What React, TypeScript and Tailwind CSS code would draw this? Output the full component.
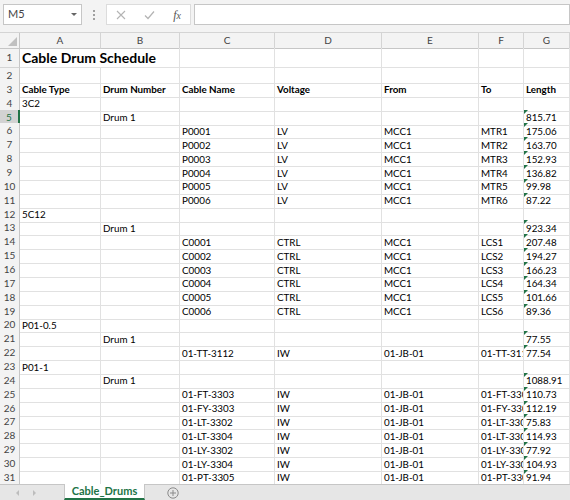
import React from "react";

const GRID = "grid grid-cols-[20px_81px_79px_95px_107px_97px_45px_46px]";
const FONT = { fontFamily: "Lato, 'Liberation Sans', sans-serif" };

type Row = {
  n: number;
  cells: string[];
  bold?: boolean;
  tri?: boolean;
};

const p = (c: string, d: string, e: string, f: string, g: string) => ["", "", c, d, e, f, g];

const rows: Row[] = [
  { n: 2, cells: [] },
  {
    n: 3,
    cells: ["Cable Type", "Drum Number", "Cable Name", "Voltage", "From", "To", "Length"],
    bold: true,
  },
  { n: 4, cells: ["3C2"] },
  { n: 5, cells: ["", "Drum 1", "", "", "", "", "815.71"], tri: true },
  { n: 6, cells: p("P0001", "LV", "MCC1", "MTR1", "175.06"), tri: true },
  { n: 7, cells: p("P0002", "LV", "MCC1", "MTR2", "163.70"), tri: true },
  { n: 8, cells: p("P0003", "LV", "MCC1", "MTR3", "152.93"), tri: true },
  { n: 9, cells: p("P0004", "LV", "MCC1", "MTR4", "136.82"), tri: true },
  { n: 10, cells: p("P0005", "LV", "MCC1", "MTR5", "99.98"), tri: true },
  { n: 11, cells: p("P0006", "LV", "MCC1", "MTR6", "87.22"), tri: true },
  { n: 12, cells: ["5C12"] },
  { n: 13, cells: ["", "Drum 1", "", "", "", "", "923.34"], tri: true },
  { n: 14, cells: p("C0001", "CTRL", "MCC1", "LCS1", "207.48"), tri: true },
  { n: 15, cells: p("C0002", "CTRL", "MCC1", "LCS2", "194.27"), tri: true },
  { n: 16, cells: p("C0003", "CTRL", "MCC1", "LCS3", "166.23"), tri: true },
  { n: 17, cells: p("C0004", "CTRL", "MCC1", "LCS4", "164.34"), tri: true },
  { n: 18, cells: p("C0005", "CTRL", "MCC1", "LCS5", "101.66"), tri: true },
  { n: 19, cells: p("C0006", "CTRL", "MCC1", "LCS6", "89.36"), tri: true },
  { n: 20, cells: ["P01-0.5"] },
  { n: 21, cells: ["", "Drum 1", "", "", "", "", "77.55"], tri: true },
  { n: 22, cells: p("01-TT-3112", "IW", "01-JB-01", "01-TT-3112", "77.54"), tri: true },
  { n: 23, cells: ["P01-1"] },
  { n: 24, cells: ["", "Drum 1", "", "", "", "", "1088.91"], tri: true },
  { n: 25, cells: p("01-FT-3303", "IW", "01-JB-01", "01-FT-3303", "110.73"), tri: true },
  { n: 26, cells: p("01-FY-3303", "IW", "01-JB-01", "01-FY-3303", "112.19"), tri: true },
  { n: 27, cells: p("01-LT-3302", "IW", "01-JB-01", "01-LT-3302", "75.83"), tri: true },
  { n: 28, cells: p("01-LT-3304", "IW", "01-JB-01", "01-LT-3304", "114.93"), tri: true },
  { n: 29, cells: p("01-LY-3302", "IW", "01-JB-01", "01-LY-3302", "77.92"), tri: true },
  { n: 30, cells: p("01-LY-3304", "IW", "01-JB-01", "01-LY-3304", "104.93"), tri: true },
  { n: 31, cells: p("01-PT-3305", "IW", "01-JB-01", "01-PT-3305", "91.94"), tri: true },
  { n: 32, cells: [], tri: true },
];

function RowHead({ n }: { n: number }) {
  const selected = n === 5;
  return (
    <div
      className={
        selected
          ? "flex items-center justify-center border-b border-r-2 border-b-[#c6c6c6] border-r-[#217346] bg-[#d2d2d2] text-[10px] text-[#217346]"
          : "flex items-center justify-center border-b border-r border-b-[#d4d4d4] border-r-[#c6c6c6] bg-[#f3f3f3] text-[10px] text-[#444]"
      }
    >
      {n}
    </div>
  );
}

function SheetRow({ row }: { row: Row }) {
  return (
    <div className={`${GRID} h-[13.86px]`}>
      <RowHead n={row.n} />
      {Array.from({ length: 7 }).map((_, i) => {
        const text = row.cells[i] ?? "";
        // green "number stored as text" marker in the Length column
        const tri = row.tri && i === 6;
        return (
          <div
            key={i}
            className={`relative flex items-center overflow-hidden whitespace-nowrap border-b border-r border-[#e1e1e1] pl-[2px] text-[9.8px] leading-[12px] text-black ${
              row.bold ? "font-bold" : ""
            }`}
          >
            {tri ? (
              <span className="absolute left-0 top-0 h-0 w-0 border-r-[4px] border-t-[4px] border-r-transparent border-t-[#217346]" />
            ) : null}
            {text}
          </div>
        );
      })}
    </div>
  );
}

function FormulaBar() {
  return (
    <div className="flex h-[33px] shrink-0 items-start border-b border-[#d4d4d4] bg-[#f3f3f3] pt-[4px]">
      <div className="ml-[3px] flex h-[21px] w-[79px] items-center justify-between border border-[#c6c6c6] bg-white pl-[4px] pr-[4px] text-[11px] text-[#444]">
        <span>M5</span>
        <span className="h-0 w-0 border-x-[3px] border-t-[3px] border-x-transparent border-t-[#666]" />
      </div>
      <div className="flex h-[21px] w-[24px] flex-col items-center justify-center gap-[2px]">
        <span className="h-[2px] w-[2px] bg-[#a0a0a0]" />
        <span className="h-[2px] w-[2px] bg-[#a0a0a0]" />
        <span className="h-[2px] w-[2px] bg-[#a0a0a0]" />
      </div>
      <div className="flex h-[21px] w-[85px] items-center justify-around border border-[#dcdcdc] bg-white">
        <svg width="10" height="10" viewBox="0 0 10 10">
          <path d="M1 1 L9 9 M9 1 L1 9" stroke="#b4b4b4" strokeWidth="1.1" fill="none" />
        </svg>
        <svg width="11" height="10" viewBox="0 0 11 10">
          <path d="M1 5.5 L4 8.5 L10 1.5" stroke="#b4b4b4" strokeWidth="1.2" fill="none" />
        </svg>
        <span
          className="text-[12px] italic text-[#555]"
          style={{ fontFamily: "'Liberation Serif', serif" }}
        >
          f<span className="text-[10px]">x</span>
        </span>
      </div>
      <div className="ml-[3px] h-[21px] flex-1 border border-[#c6c6c6] bg-white" />
    </div>
  );
}

function ColumnHeader() {
  const letters = ["A", "B", "C", "D", "E", "F", "G"];
  return (
    <div className={`${GRID} h-[15px] shrink-0`}>
      <div className="relative border-b border-r border-[#c6c6c6] bg-[#f3f3f3]">
        <span className="absolute bottom-[2px] right-[2px] h-0 w-0 border-b-[9px] border-l-[9px] border-b-[#c0c0c0] border-l-transparent" />
      </div>
      {letters.map((l) => (
        <div
          key={l}
          className="flex items-center justify-center border-b border-r border-b-[#c6c6c6] border-r-[#d4d4d4] bg-[#f3f3f3] text-[10px] text-[#444]"
        >
          {l}
        </div>
      ))}
    </div>
  );
}

function TabBar() {
  return (
    <div className="flex h-[16px] shrink-0 items-stretch border-t border-[#c6c6c6] bg-[#e6e6e6]">
      <div className="flex w-[64px] items-center gap-[14px] pl-[16px]">
        <span className="h-0 w-0 border-y-[3px] border-r-[3px] border-y-transparent border-r-[#bdbdbd]" />
        <span className="h-0 w-0 border-y-[3px] border-l-[3px] border-y-transparent border-l-[#bdbdbd]" />
      </div>
      <div className="-mt-px flex w-[81px] items-center justify-center border-x border-b-2 border-[#c6c6c6] border-b-[#217346] bg-white text-[11px] font-bold text-[#217346]">
        Cable_Drums
      </div>
      <div className="flex w-[54px] items-center justify-center pl-[2px]">
        <svg width="12" height="12" viewBox="0 0 12 12">
          <circle cx="6" cy="6" r="5.2" stroke="#8a8a8a" strokeWidth="1" fill="none" />
          <path d="M6 3 V9 M3 6 H9" stroke="#8a8a8a" strokeWidth="1" />
        </svg>
      </div>
    </div>
  );
}

export default function App() {
  return (
    <div className="flex h-[500px] w-[570px] flex-col overflow-hidden bg-white" style={FONT}>
      <FormulaBar />
      <ColumnHeader />
      <div className="flex-1 overflow-hidden">
        <div className={`${GRID} h-[20px]`}>
          <RowHead n={1} />
          <div className="col-span-2 flex items-center overflow-hidden whitespace-nowrap border-b border-r border-[#e1e1e1] pl-[2px] text-[14px] font-bold leading-[16px] text-black">
            Cable Drum Schedule
          </div>
          {Array.from({ length: 5 }).map((_, i) => (
            <div key={i} className="border-b border-r border-[#e1e1e1]" />
          ))}
        </div>
        {rows.map((r) => (
          <SheetRow key={r.n} row={r} />
        ))}
      </div>
      <TabBar />
    </div>
  );
}
